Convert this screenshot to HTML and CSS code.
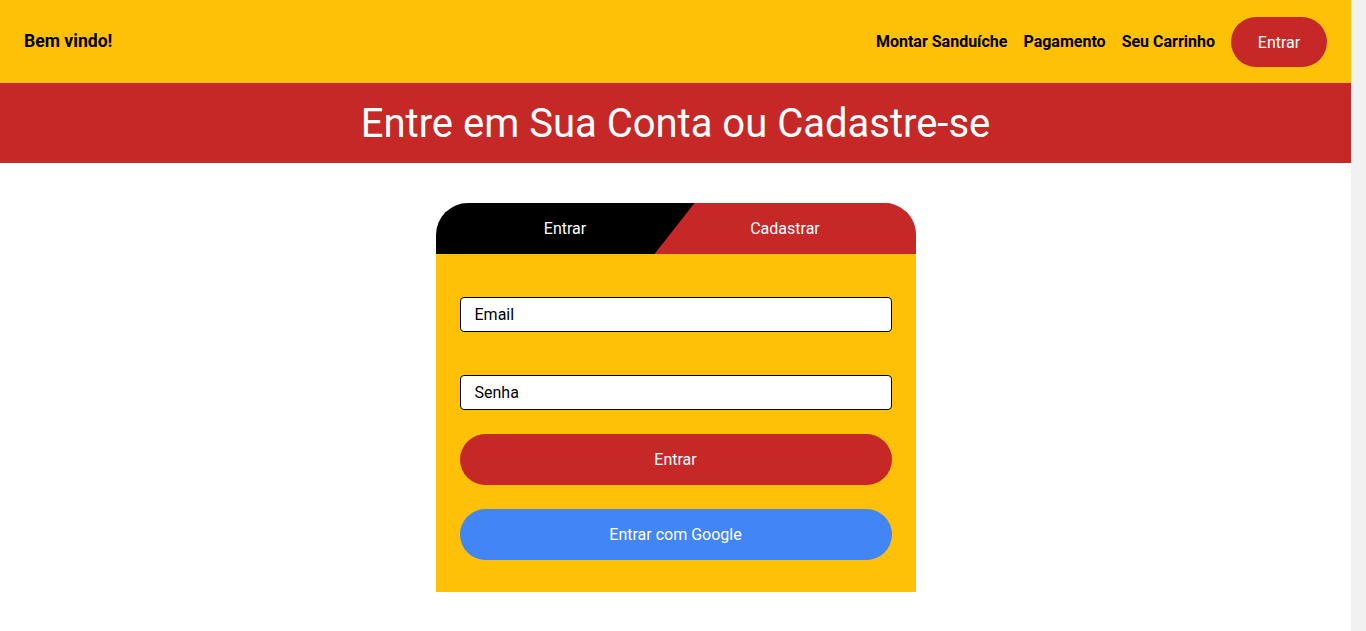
FILE: index.html
```html
<!DOCTYPE html>
<html lang="pt-BR">
<head>
<meta charset="utf-8">
<title>Entrar</title>
<link rel="stylesheet" href="styles.css">
</head>
<body>
<header class="topbar">
  <div class="brand">Bem vindo!</div>
  <nav class="nav">
    <a class="nav-link" href="#">Montar Sanduíche</a>
    <a class="nav-link" href="#">Pagamento</a>
    <a class="nav-link" href="#">Seu Carrinho</a>
    <button class="nav-btn">Entrar</button>
  </nav>
</header>
<section class="banner">
  <h1 class="banner-title">Entre em Sua Conta ou Cadastre-se</h1>
</section>
<main class="main">
  <div class="card">
    <div class="tabs">
      <div class="tab tab-login">Entrar</div>
      <div class="tab tab-signup">Cadastrar</div>
    </div>
    <form class="card-body">
      <input class="field field-email" type="email" placeholder="Email">
      <input class="field field-pass" type="password" placeholder="Senha">
      <button type="button" class="btn btn-red">Entrar</button>
      <button type="button" class="btn btn-blue">Entrar com Google</button>
    </form>
  </div>
</main>
</body>
</html>
```
FILE: styles.css
```css
* { box-sizing: border-box; }
html {
  margin: 0;
  padding: 0;
  background: #f1f1f1;
}
body {
  margin: 0 15px 0 0;
  padding: 0;
  font-family: Roboto, "Noto Sans", Arial, sans-serif;
  background: #fff;
  color: #000;
}
.topbar {
  height: 83px;
  background: #FFC107;
  display: flex;
  align-items: center;
  justify-content: space-between;
  padding: 0 24px;
}
.brand {
  font-weight: 700;
  font-size: 17.6px;
  margin-top: -2px;
}
.nav {
  display: flex;
  align-items: center;
  gap: 16px;
}
.nav-link {
  color: #000;
  text-decoration: none;
  font-weight: 700;
  font-size: 16px;
  margin-top: -1px;
}
.nav-btn {
  width: 96px;
  height: 50px;
  border: none;
  border-radius: 25px;
  background: #C62828;
  color: #fff;
  font-family: inherit;
  font-size: 16px;
  margin-top: 1px;
}
.banner {
  height: 80px;
  background: #C62828;
  display: flex;
  align-items: center;
  justify-content: center;
}
.banner-title {
  margin: 0;
  color: #fff;
  font-weight: 400;
  font-size: 40px;
}
.main {
  display: flex;
  justify-content: center;
  padding: 40px 0 56px;
}
.card {
  width: 480px;
}
.tabs {
  display: flex;
  height: 51px;
  background: linear-gradient(to right, #000 259px, #C62828 259px);
  border-radius: 32px 32px 0 0;
  overflow: hidden;
  color: #fff;
  font-size: 16px;
}
.tab {
  display: flex;
  align-items: center;
  justify-content: center;
}
.tab-login {
  width: 219px;
  padding-left: 40px;
}
.tab-signup {
  flex: 1;
  background: #C62828;
  clip-path: polygon(40px 0, 100% 0, 100% 100%, 0 100%);
}
.card-body {
  background: #FFC107;
  padding: 43px 24px 32px;
  display: flex;
  flex-direction: column;
  margin: 0;
}
.field {
  height: 35px;
  border: 1px solid #000;
  border-radius: 4px;
  padding: 0 14px;
  font-family: inherit;
  font-size: 16px;
  color: #000;
  background: #fff;
}
.field::placeholder { color: #000; }
.field-email { margin-bottom: 43px; }
.field-pass { margin-bottom: 24px; }
.btn {
  height: 51px;
  border: none;
  border-radius: 26px;
  color: #fff;
  font-family: inherit;
  font-size: 16px;
}
.btn-red { background: #C62828; margin-bottom: 24px; }
.btn-blue { background: #4285F4; }
```
